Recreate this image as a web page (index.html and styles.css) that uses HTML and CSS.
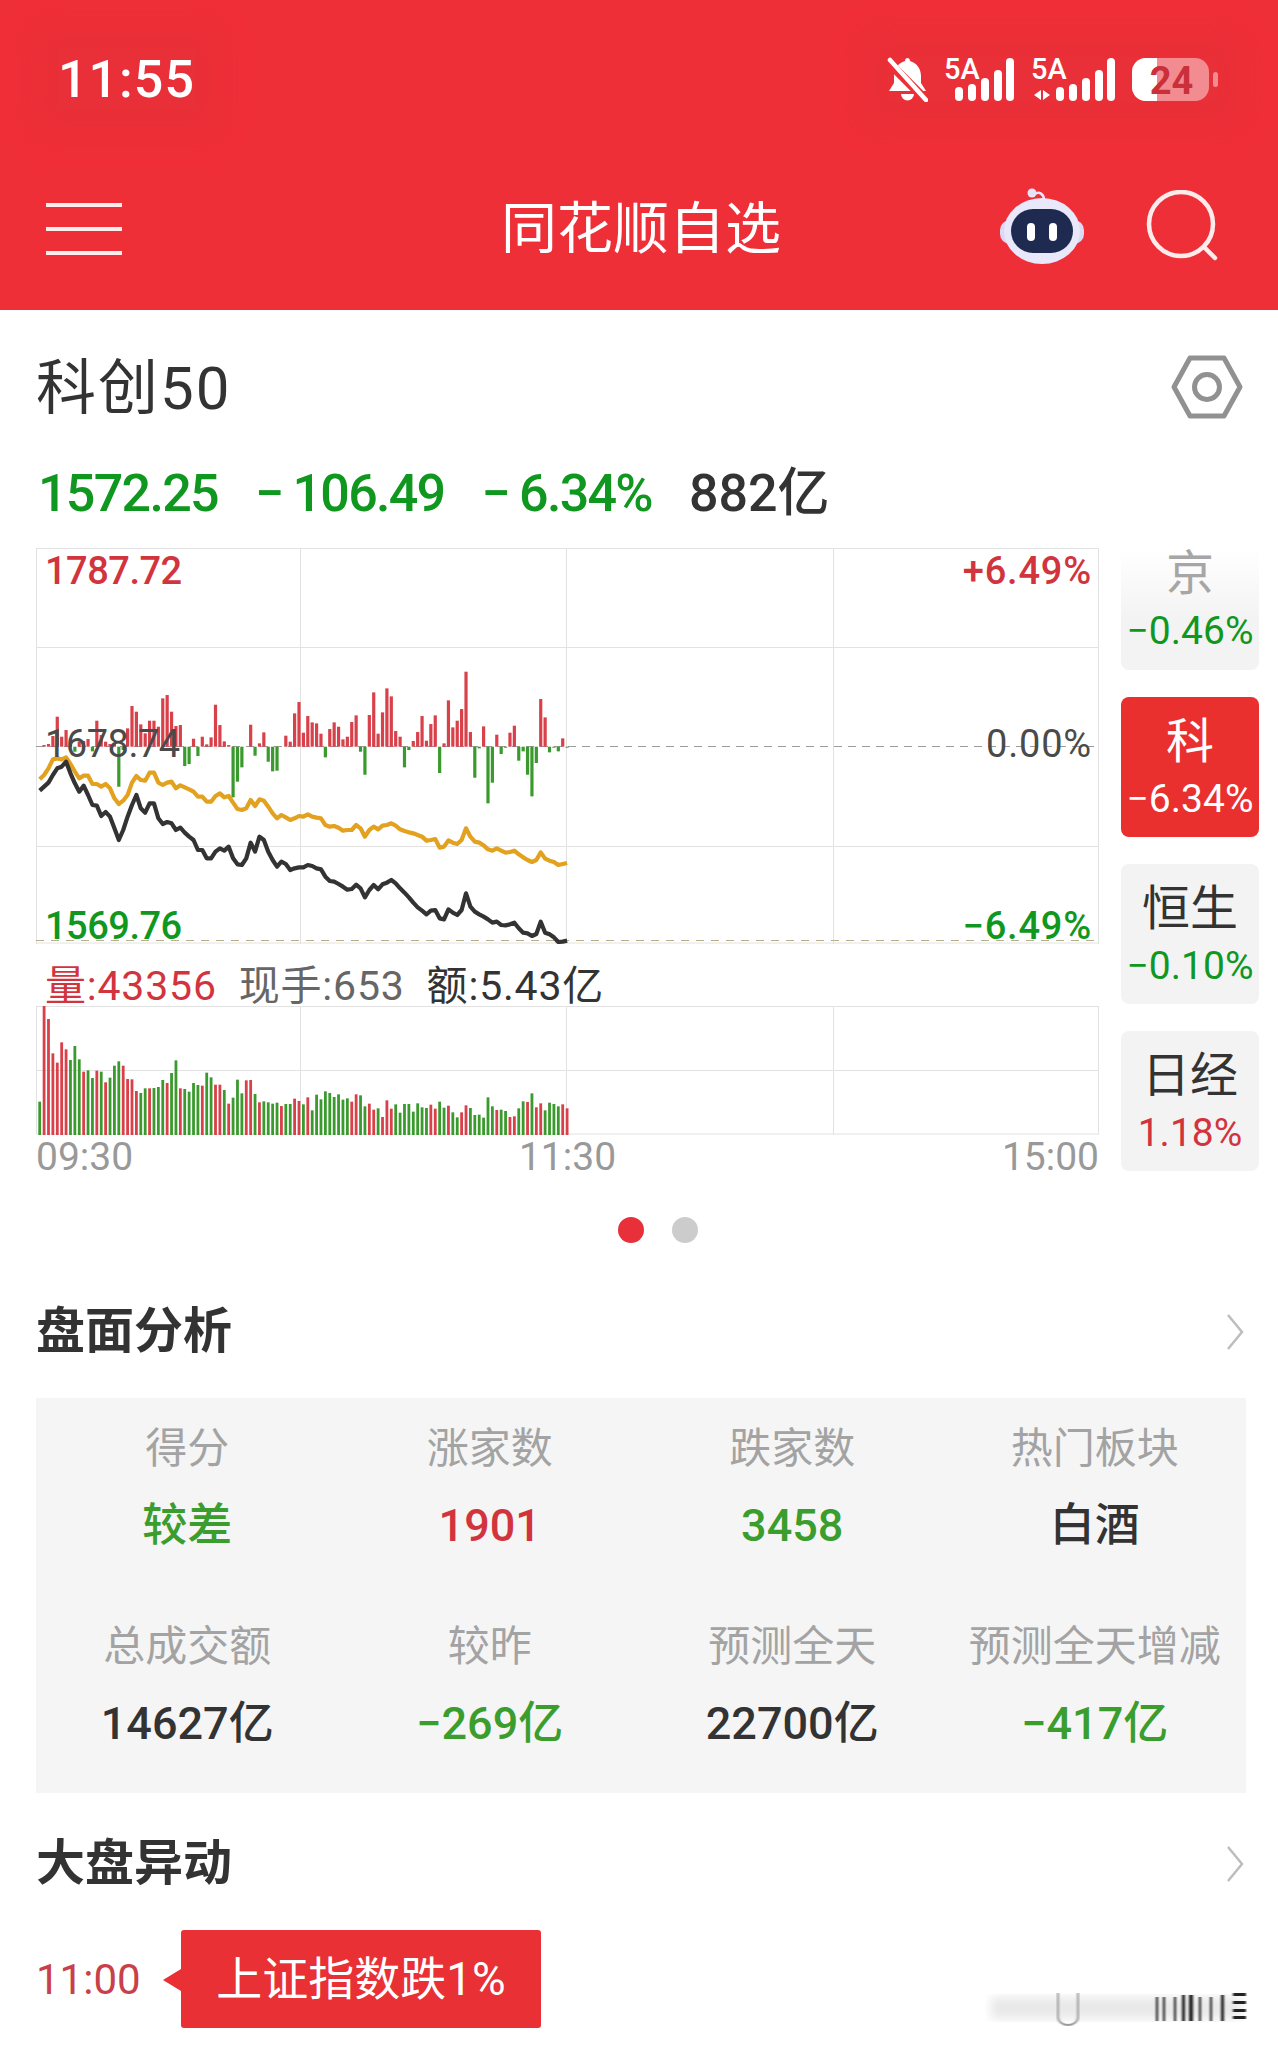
FILE: index.html
```html
<!DOCTYPE html>
<html lang="zh">

<head>
    <meta charset="UTF-8">
    <meta name="viewport" content="width=device-width, initial-scale=1.0">
    <title>同花顺自选</title>
    <link rel="stylesheet" href="styles.css">
</head>

<body>
    <header class="top">
        <div class="status-bar">
            <span class="clock">11:55</span>
            <div class="status-icons">
                <svg class="bell" width="41" height="45" viewBox="0 0 41 45">
                    <path fill="#fff" d="M20 1a3 3 0 0 1 3 3c7 2 11 8 11 15v7l5 8H2l5-8v-7c0-7 4-13 11-15a3 3 0 0 1 2-3z" />
                    <path fill="#fff" d="M14 37h13a6.500 6.500 0 0 1-13 0z" />
                    <path stroke="#ef2f38" stroke-width="9" d="M1 5l38 38" />
                    <path stroke="#fff" stroke-width="4.500" stroke-linecap="round" d="M3 3l36 40" />
                </svg>
                <svg width="71" height="57" viewBox="0 -6 71 57">
                    <text class="net" x="0" y="22">5A</text>
                    <g fill="#fff">
                        <rect x="11" y="30" width="8" height="14" rx="4" />
                        <rect x="24" y="27" width="8" height="17" rx="4" />
                        <rect x="37" y="21" width="8" height="23" rx="4" />
                        <rect x="50" y="13" width="8" height="31" rx="4" />
                        <rect x="62" y="1" width="8" height="43" rx="4" />
                    </g>
                </svg>
                <svg width="85" height="57" viewBox="0 -6 85 57">
                    <text class="net" x="0" y="22">5A</text>
                    <g fill="#fff">
                        <path d="M10 33v10l-7-5zM12 33v10l7-5z" />
                        <rect x="25" y="30" width="8" height="14" rx="4" />
                        <rect x="38" y="27" width="8" height="17" rx="4" />
                        <rect x="51" y="21" width="8" height="23" rx="4" />
                        <rect x="64" y="13" width="8" height="31" rx="4" />
                        <rect x="76" y="1" width="8" height="43" rx="4" />
                    </g>
                </svg>
                <svg width="86" height="45" viewBox="0 0 86 45">
                    <rect x="0" y="1" width="77" height="43" rx="14" fill="#fff" opacity="0.45" />
                    <path fill="#fff" d="M14 1H25V44H14A14 14 0 0 1 0 30V15A14 14 0 0 1 14 1Z" />
                    <rect x="81" y="15" width="5" height="15" rx="2.500" fill="#fff" opacity="0.45" />
                    <text class="batt" x="39.500" y="37" text-anchor="middle">24</text>
                </svg>
            </div>
        </div>
        <div class="app-bar">
            <div class="menu"><span></span><span></span><span></span></div>
            <h1>同花顺自选</h1>
            <div class="app-actions">
                <svg width="84" height="76" viewBox="0 0 84 76">
                    <path d="M35 6c4-3 9 0 9 6" fill="none" stroke="#e6e4f8" stroke-width="2.500" />
                    <circle cx="32" cy="5" r="4.500" fill="#e6e4f8" />
                    <rect x="0" y="32" width="84" height="24" rx="10" fill="#dcd9f4" />
                    <ellipse cx="42" cy="43" rx="38" ry="33" fill="#e9e7fa" />
                    <rect x="11" y="21" width="62" height="44" rx="22" fill="#1e2a4f" />
                    <rect x="27" y="35" width="8" height="18" rx="4" fill="#fff" />
                    <rect x="49" y="35" width="8" height="18" rx="4" fill="#fff" />
                </svg>
                <svg width="72" height="72" viewBox="0 0 72 72" fill="none" stroke="#fdeceb" stroke-width="4.500">
                    <circle cx="35" cy="34" r="32" />
                    <path d="M58 57l11 11" stroke-linecap="round" />
                </svg>
            </div>
        </div>
    </header>

    <main>
        <section class="index-head">
            <div class="index-title">
                <h2>科创50</h2>
                <svg width="72" height="64" viewBox="0 0 72 64" fill="none" stroke="#919191" stroke-width="5" stroke-linejoin="round">
                    <path d="M3 32L19 3H53L69 32L53 61H19Z" />
                    <circle cx="36" cy="32" r="12.500" />
                </svg>
            </div>
            <div class="index-quote">
                <span class="down">1572.25</span>
                <span class="down"><span class="minus">−</span>106.49</span>
                <span class="down"><span class="minus">−</span>6.34%</span>
                <span class="quote-amount">882亿</span>
            </div>
        </section>

        <section class="market">
            <div class="charts">
                <div class="price-chart">
                    <svg id="price-svg" width="1063" height="396" viewBox="0 0 1063 396"></svg>
                    <span class="tag tag-left tag-high up">1787.72</span>
                    <span class="tag tag-left tag-mid flat">1678.74</span>
                    <span class="tag tag-left tag-low down">1569.76</span>
                    <span class="tag tag-right tag-high up">+6.49%</span>
                    <span class="tag tag-right tag-mid flat">0.00%</span>
                    <span class="tag tag-right tag-low down">−6.49%</span>
                </div>
                <div class="vol-info">
                    <span class="up">量:43356</span>
                    <span class="vol-hand">现手:653</span>
                    <span>额:5.43亿</span>
                </div>
                <svg id="vol-svg" class="vol-chart" width="1063" height="130" viewBox="0 0 1063 130"></svg>
                <div class="time-axis">
                    <span>09:30</span>
                    <span>11:30</span>
                    <span>15:00</span>
                </div>
            </div>
            <div class="index-tabs">
                <div class="tab tab-fade">
                    <b>京</b>
                    <span class="down">−0.46%</span>
                </div>
                <div class="tab tab-active">
                    <b>科</b>
                    <span>−6.34%</span>
                </div>
                <div class="tab">
                    <b>恒生</b>
                    <span class="down">−0.10%</span>
                </div>
                <div class="tab">
                    <b>日经</b>
                    <span class="up">1.18%</span>
                </div>
            </div>
        </section>

        <div class="dots"><i class="dot-on"></i><i></i></div>

        <div class="block-head">
            <h3>盘面分析</h3>
            <svg width="18" height="36" viewBox="0 0 18 36" fill="none" stroke="#bdbdbd" stroke-width="2.500">
                <path d="M2 1l14 17L2 35" />
            </svg>
        </div>
        <section class="analysis">
            <div class="cell"><span class="cell-label">得分</span><span class="cell-value rise-green">较差</span></div>
            <div class="cell"><span class="cell-label">涨家数</span><span class="cell-value up">1901</span></div>
            <div class="cell"><span class="cell-label">跌家数</span><span class="cell-value rise-green">3458</span></div>
            <div class="cell"><span class="cell-label">热门板块</span><span class="cell-value">白酒</span></div>
            <div class="cell"><span class="cell-label">总成交额</span><span class="cell-value">14627亿</span></div>
            <div class="cell"><span class="cell-label">较昨</span><span class="cell-value rise-green">−269亿</span></div>
            <div class="cell"><span class="cell-label">预测全天</span><span class="cell-value">22700亿</span></div>
            <div class="cell"><span class="cell-label">预测全天增减</span><span class="cell-value rise-green">−417亿</span></div>
        </section>

        <div class="block-head block-head-second">
            <h3>大盘异动</h3>
            <svg width="18" height="36" viewBox="0 0 18 36" fill="none" stroke="#bdbdbd" stroke-width="2.500">
                <path d="M2 1l14 17L2 35" />
            </svg>
        </div>
        <div class="event">
            <span class="event-time">11:00</span>
            <div class="event-badge">上证指数跌1%</div>
        </div>
    </main>

    <!-- blurred watermark in the corner -->
    <svg class="watermark" width="262" height="40" viewBox="0 0 262 40">
        <defs>
            <filter id="soft"><feGaussianBlur stdDeviation="5" /></filter>
            <filter id="soft-x"><feGaussianBlur stdDeviation="1 0.300" /></filter>
        </defs>
        <rect x="6" y="10" width="250" height="22" fill="#e9e9e9" filter="url(#soft)" />
        <path d="M73 6v24a10 8 0 0 0 20 0V6" fill="none" stroke="#9a9a9a" stroke-width="2" filter="url(#soft-x)" />
        <g fill="#222" filter="url(#soft-x)">
            <rect x="171" y="10" width="2" height="24" />
            <rect x="178" y="10" width="2" height="24" />
            <rect x="189" y="10" width="2" height="24" />
            <rect x="197" y="8" width="3" height="26" />
            <rect x="204" y="8" width="4" height="26" />
            <rect x="214" y="10" width="2" height="24" />
            <rect x="225" y="10" width="2" height="24" />
            <rect x="236" y="8" width="3" height="26" />
            <rect x="248" y="6" width="13" height="3" />
            <rect x="248" y="14" width="13" height="3" />
            <rect x="248" y="22" width="13" height="3" />
            <rect x="248" y="29" width="13" height="3" />
        </g>
    </svg>

    <script src="chart.js"></script>
</body>

</html>
```

FILE: styles.css
```css
* {
    box-sizing: border-box;
}

body {
    position: relative;
    width: 1278px;
    height: 2052px;
    margin: 0;
    overflow: hidden;
    background-color: #ffffff;
    color: #333333;
    font-family: Roboto, "Noto Sans CJK SC", sans-serif;
}

h1,
h2,
h3 {
    margin: 0;
    font-weight: 400;
}

.up {
    color: #d2343e;
}

.down {
    color: #0f971f;
}

.flat {
    color: #4a4a4a;
}

.rise-green {
    color: #3b9d2d;
}

/* red top area */
.top {
    background-color: #ef2f38;
    color: #ffffff;
}

.status-bar {
    display: flex;
    justify-content: space-between;
    align-items: center;
    height: 142px;
    padding: 16px 60px 0 58px;
}

.clock {
    font-size: 52px;
    font-weight: 500;
    letter-spacing: 1px;
    background-color: #e92f37;
    box-shadow: 0 0 26px 20px #e92f37;
}

.status-icons {
    display: flex;
    align-items: center;
    gap: 16px;
    height: 45px;
    background-color: #e92f37;
    box-shadow: 0 0 26px 20px #e92f37;
}

.net {
    font-family: Roboto, sans-serif;
    font-size: 29px;
    font-weight: 500;
    fill: #fff;
}

.batt {
    font-family: Roboto, sans-serif;
    font-size: 38px;
    font-weight: 700;
    fill: #c9303a;
}

.app-bar {
    display: grid;
    grid-template-columns: 1fr auto 1fr;
    align-items: center;
    height: 168px;
    padding: 0 60px 0 46px;
}

.menu {
    display: flex;
    flex-direction: column;
    gap: 20px;
    width: 76px;
    margin-top: 5px;
}

.menu span {
    height: 4px;
    background-color: #fdecec;
}

.app-bar h1 {
    margin: 5px 0 0 18px;
    font-size: 56px;
    line-height: 70px;
}

.app-actions {
    display: flex;
    justify-content: flex-end;
    align-items: center;
    gap: 62px;
}

/* index name and quote */
.index-head {
    padding: 0 35px 0 36px;
}

.index-title {
    display: flex;
    justify-content: space-between;
    align-items: center;
    height: 154px;
}

.index-title h2 {
    margin-bottom: 10px;
    font-size: 60px;
    letter-spacing: 2px;
}

.index-quote {
    display: flex;
    align-items: center;
    gap: 37px;
    height: 60px;
    padding-left: 2px;
    font-size: 52px;
    font-weight: 500;
    line-height: 60px;
    letter-spacing: -1.7px;
}

.minus {
    margin-right: 10px;
}

.quote-amount {
    letter-spacing: 0;
}

/* chart with the index tabs beside it */
.market {
    display: flex;
    gap: 22px;
    height: 634px;
    margin-top: 24px;
    padding-left: 36px;
}

.charts {
    width: 1063px;
}

.price-chart {
    position: relative;
    height: 396px;
}

.price-chart svg,
.vol-chart {
    display: block;
}

.tag {
    position: absolute;
    font-size: 38px;
    font-weight: 500;
    line-height: 40px;
    letter-spacing: -0.5px;
}

.tag.flat {
    font-weight: 400;
}

.tag-left {
    left: 9px;
}

.tag-right {
    right: 7px;
    letter-spacing: 0.8px;
}

.tag-high {
    top: 3px;
}

.tag-mid {
    top: 176px;
}

.tag-low {
    top: 358px;
}

.vol-info {
    display: flex;
    gap: 22px;
    height: 62px;
    padding: 22px 0 0 9px;
    font-size: 41px;
    line-height: 40px;
    letter-spacing: 0.8px;
}

.vol-hand {
    color: #666666;
}

.time-axis {
    display: flex;
    justify-content: space-between;
    height: 48px;
    color: #999999;
    font-size: 39px;
    line-height: 43px;
}

.index-tabs {
    display: flex;
    flex-direction: column;
    gap: 27px;
    width: 138px;
}

.tab {
    display: flex;
    flex: none;
    flex-direction: column;
    align-items: center;
    height: 140px;
    padding-top: 15px;
    border-radius: 8px;
    background-color: #f3f3f4;
}

.tab b {
    font-size: 48px;
    font-weight: 400;
    line-height: 60px;
}

.tab span {
    font-size: 39px;
    line-height: 54px;
}

/* top tab is scrolled half out of the column */
.tab-fade {
    height: 122px;
    padding-top: 0;
    border-radius: 0 0 8px 8px;
    background-image: linear-gradient(#ffffff, #f3f3f4 72px);
}

.tab-fade b {
    color: #a6a6a6;
    line-height: 52px;
}

.tab-fade span {
    line-height: 62px;
}

.tab-active {
    background-color: #e9302f;
    color: #ffffff;
}

.dots {
    display: flex;
    justify-content: center;
    gap: 28px;
    margin-top: 35px;
    padding-left: 38px;
}

.dots i {
    width: 26px;
    height: 26px;
    border-radius: 50%;
    background-color: #cccccc;
}

.dots .dot-on {
    background-color: #e8303a;
}

/* section headers */
.block-head {
    display: flex;
    justify-content: space-between;
    align-items: center;
    height: 60px;
    margin: 59px 34px 36px 36px;
}

.block-head-second {
    margin-top: 41px;
}

.block-head h3 {
    font-size: 49px;
    font-weight: 700;
    line-height: 60px;
}

.analysis {
    display: grid;
    grid-template-columns: repeat(4, 1fr);
    row-gap: 61px;
    width: 1210px;
    margin-left: 36px;
    padding: 21px 0 39px;
    background-color: #f5f5f5;
}

.cell {
    display: flex;
    flex-direction: column;
    align-items: center;
    gap: 17px;
}

.cell-label {
    color: #a3a3a3;
    font-size: 42px;
    line-height: 60px;
}

.cell-value {
    font-size: 45px;
    font-weight: 500;
    line-height: 60px;
}

.event {
    display: flex;
    align-items: center;
    padding-left: 36px;
}

.event-time {
    width: 145px;
    color: #c8404a;
    font-size: 42px;
}

.event-badge {
    position: relative;
    display: flex;
    justify-content: center;
    align-items: center;
    width: 360px;
    height: 98px;
    border-radius: 3px;
    background-color: #e83035;
    color: #ffffff;
    font-size: 46px;
    line-height: 96px;
}

.event-badge::before {
    content: "";
    position: absolute;
    top: 39px;
    left: -18px;
    border-top: 11px solid transparent;
    border-bottom: 11px solid transparent;
    border-right: 18px solid #e83035;
}

.watermark {
    position: absolute;
    top: 1987px;
    left: 985px;
}
```

FILE: chart.js
```js
// Values are read off the 3x crops: y = top + value / 3, bars are one minute apart.
const BAR_STEP = 4.395;
const BAR_START = 3.7;

const goldLine = [
    358, 345, 325, 298, 295, 298, 292, 312, 335, 355, 347, 347, 372, 372, 380, 372, 385, 415, 432, 422,
    405, 368, 348, 360, 362, 338, 338, 368, 375, 368, 365, 385, 376, 382, 388, 395, 410, 410, 425, 425,
    408, 400, 412, 408, 428, 447, 450, 445, 420, 438, 418, 422, 440, 460, 475, 465, 472, 480, 475, 468,
    470, 463, 470, 473, 475, 495, 500, 498, 503, 512, 510, 510, 495, 505, 530, 510, 500, 508, 497, 495,
    490, 497, 508, 513, 517, 520, 525, 530, 542, 540, 537, 563, 560, 541, 548, 552, 540, 505, 530, 545,
    548, 556, 568, 572, 565, 572, 578, 576, 572, 583, 592, 600, 606, 600, 577, 596, 602, 606, 615, 612, 609
];

const blackLine = [
    392, 380, 368, 345, 325, 320, 305, 340, 370, 395, 377, 405, 435, 437, 468, 456, 470, 505, 540, 510,
    470, 435, 405, 445, 458, 430, 430, 475, 492, 486, 490, 510, 503, 518, 530, 540, 570, 570, 595, 595,
    575, 565, 572, 560, 595, 613, 615, 595, 548, 575, 530, 540, 575, 600, 620, 605, 612, 630, 625, 622,
    622, 615, 618, 625, 628, 650, 663, 665, 672, 680, 689, 687, 674, 685, 712, 690, 675, 688, 673, 668,
    660, 670, 685, 698, 712, 728, 742, 752, 763, 752, 750, 775, 778, 748, 758, 765, 750, 700, 740, 755,
    763, 770, 778, 788, 785, 795, 796, 793, 788, 805, 818, 820, 828, 822, 785, 818, 823, 832, 846, 845, 842
];

// Signed bar heights around the zero line
const flowBars = [
    0, 5, 8, 32, 90, 30, 50, 25, -15, 15, 17, 23, -14, 78, 35, 15, 8, 10, -120, -10,
    55, 122, 105, 67, 40, 78, 78, 60, 145, 155, 105, 62, 65, -58, -52, 24, -28, 30, 7, 28,
    126, 65, 16, 5, -152, -105, -62, 0, 66, -27, 10, 43, -45, -74, -72, 0, 33, 15, 100, 134,
    42, 92, 73, 70, 39, -32, 53, 73, 60, 22, 30, 74, 94, -15, -84, 95, 163, 39, 103, 175,
    151, 47, 30, -62, -10, 17, 44, 92, 18, 68, 94, -79, 10, 139, 58, 78, 113, 225, 44, -93,
    -5, 61, -170, -108, 36, -22, -3, 42, 63, -42, -14, -84, -149, -49, 143, 88, -17, -3, -14, 25, -3
];

// Top of each volume bar, base is at 405
const volTops = [
    305, 18, 57, 160, 188, 127, 148, 180, 138, 178, 215, 211, 234, 212, 215, 247, 233, 197, 184, 197,
    237, 238, 273, 279, 265, 265, 264, 261, 240, 249, 219, 181, 265, 267, 275, 249, 255, 257, 218, 232,
    254, 254, 270, 311, 293, 239, 280, 241, 240, 282, 307, 304, 307, 311, 308, 318, 312, 312, 296, 303,
    313, 292, 331, 284, 298, 274, 279, 291, 283, 299, 295, 305, 283, 286, 319, 311, 329, 325, 351, 301,
    326, 313, 338, 312, 312, 335, 310, 322, 324, 314, 326, 305, 323, 317, 337, 352, 337, 316, 324, 345,
    344, 353, 292, 319, 330, 329, 333, 351, 349, 325, 304, 306, 280, 322, 310, 331, 308, 312, 319, 313, 325
];

const volColors = 'grrrrrrggg' + 'rggrgrgggr' + 'rrrggrgggr' + 'ggrggggrgg' + 'rrgrgggrrg' + 'rggggrggrr' +
    'grgggggggg' + 'grrggrrgrr' + 'rggggggggr' + 'rggrggrrgg' + 'ggggrggrrg' + 'grgrrggggrr';

const RED = '#d8404a';
const GREEN = '#3b9a2e';
const GRID = '#e2e2e2';

function add(svg, name, attrs) {
    const el = document.createElementNS('http://www.w3.org/2000/svg', name);
    Object.keys(attrs).forEach(key => el.setAttribute(key, attrs[key]));
    svg.appendChild(el);
    return el;
}

function line(svg, x1, y1, x2, y2, stroke, dash) {
    const el = add(svg, 'line', { x1, y1, x2, y2, stroke, 'stroke-width': 1 });
    if (dash) el.setAttribute('stroke-dasharray', dash);
}

function drawGrid(svg, height, rows) {
    [0.5, 264.5, 530.5, 797.5, 1062.5].forEach(x => line(svg, x, 0, x, height, GRID));
    rows.forEach(y => line(svg, 0, y, 1063, y, GRID));
}

function drawPrice() {
    const svg = document.getElementById('price-svg');
    drawGrid(svg, 396, [0.5, 99.5, 298.5, 395]);
    line(svg, 0, 198.5, 1063, 198.5, '#9c9c9c', '8 6');
    line(svg, 0, 392.5, 1063, 392.5, '#b7ae8a', '8 7');

    flowBars.forEach((value, i) => {
        if (value === 0) return;
        add(svg, 'rect', {
            x: BAR_START + BAR_STEP * i - 1.6,
            y: value > 0 ? 198.7 - value / 3 : 198.7,
            width: 3.2,
            height: Math.abs(value) / 3,
            fill: value > 0 ? RED : GREEN
        });
    });

    [[goldLine, '#e2a21f'], [blackLine, '#333333']].forEach(([values, color]) => {
        const points = values.map((value, i) => `${BAR_START + BAR_STEP * i},${112 + value / 3}`);
        add(svg, 'polyline', {
            points: points.join(' '),
            fill: 'none',
            stroke: color,
            'stroke-width': 4.2,
            'stroke-linejoin': 'round'
        });
    });
}

function drawVolume() {
    const svg = document.getElementById('vol-svg');
    drawGrid(svg, 128, [0.5, 64.5, 128]);

    volTops.forEach((top, i) => {
        add(svg, 'rect', {
            x: BAR_START + BAR_STEP * i - 1.4,
            y: top / 3 - 6,
            width: 2.8,
            height: (405 - top) / 3,
            fill: volColors[i] === 'r' ? RED : GREEN
        });
    });
}

drawPrice();
drawVolume();
```
